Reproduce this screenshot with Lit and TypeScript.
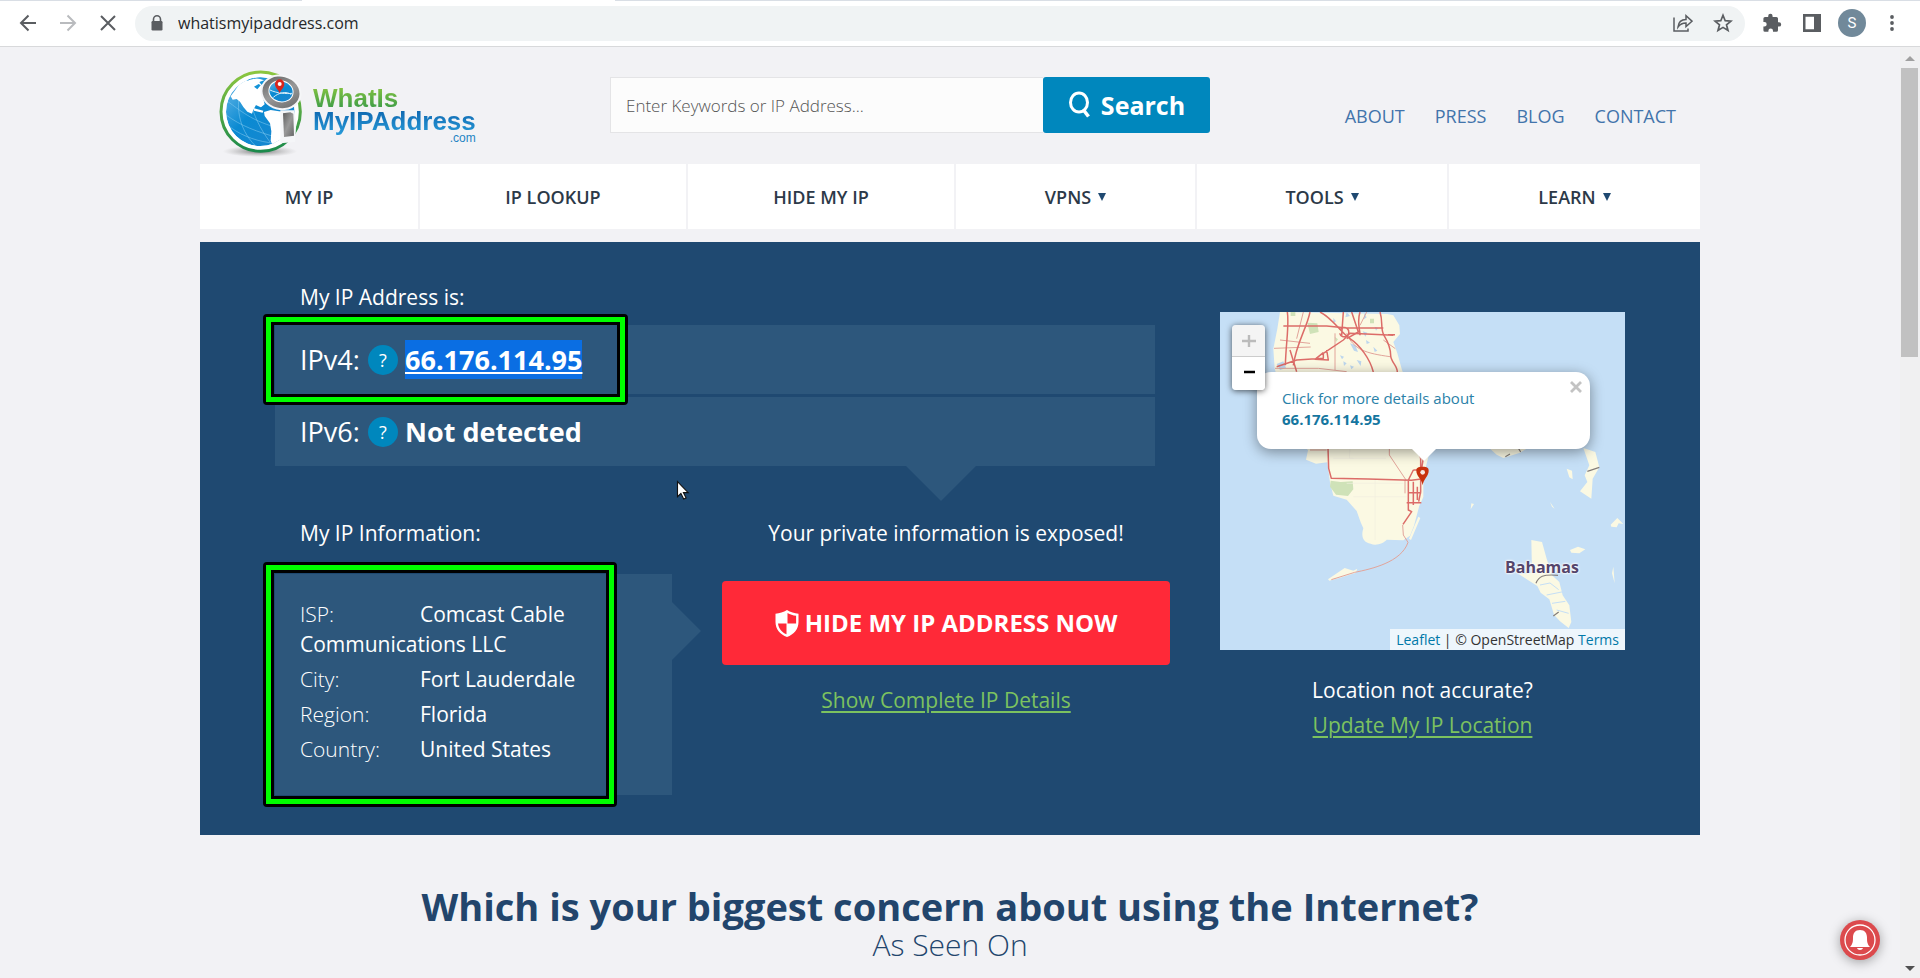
import { LitElement, html, css, svg } from "lit";
import { customElement } from "lit/decorators.js";

/* ---------- Browser toolbar ---------- */
@customElement("browser-bar")
class BrowserBar extends LitElement {
  static styles = css`
    :host {
      display: flex;
      align-items: center;
      gap: 7px;
      height: 47px;
      padding: 0 8px;
      box-sizing: border-box;
      border-bottom: 1px solid #d8d9db;
      background: linear-gradient(90deg, #d9dee5 302px, #fff 302px 615px, #d9dee5 615px) top / 100% 1px no-repeat #fff;
      font-family: "Open Sans", "Noto Sans", sans-serif;
    }
    .group { display: flex; }
    button {
      display: flex;
      align-items: center;
      justify-content: center;
      width: 40px;
      height: 34px;
      padding: 0;
      border: 0;
      background: none;
      color: #5a5d61;
    }
    .dim { color: #b9bbbe; }
    .omnibox {
      display: flex;
      align-items: center;
      flex: 1;
      height: 35px;
      padding: 0 2px 0 14px;
      border-radius: 18px;
      background: #f0f3f4;
    }
    .omnibox input {
      flex: 1;
      min-width: 0;
      height: 30px;
      margin: 0;
      padding: 0 0 0 13px;
      border: 0;
      outline: 0;
      background: none;
      color: #26282b;
      font: 400 16px/30px "Open Sans", "Noto Sans", sans-serif;
    }
    .avatar {
      display: flex;
      align-items: center;
      justify-content: center;
      width: 28px;
      height: 28px;
      border-radius: 50%;
      background: #71899a;
      color: #fff;
      font: 400 15px/28px Roboto, sans-serif;
    }
  `;
  render() {
    return html`
      <div class="group">
        <button aria-label="Back">
          <svg width="20" height="20" viewBox="0 0 20 20" fill="none" stroke="currentColor" stroke-width="2"><path d="M18 10H3M10.500 2.500 3 10l7.500 7.500" /></svg>
        </button>
        <button class="dim" aria-label="Forward">
          <svg width="20" height="20" viewBox="0 0 20 20" fill="none" stroke="currentColor" stroke-width="2"><path d="M2 10h15M9.500 2.500 17 10l-7.500 7.500" /></svg>
        </button>
        <button aria-label="Stop loading">
          <svg width="20" height="20" viewBox="0 0 20 20" fill="none" stroke="currentColor" stroke-width="2"><path d="m3 3 14 14M17 3 3 17" /></svg>
        </button>
      </div>
      <div class="omnibox">
        <svg width="16" height="18" viewBox="0 0 16 18"><path d="M4.500 8V5.200a3.500 3.500 0 0 1 7 0V8" fill="none" stroke="#5a5d61" stroke-width="1.600" /><rect x="2.500" y="7" width="11" height="9.500" rx="1.200" fill="#5a5d61" /></svg>
        <input aria-label="Address" value="whatismyipaddress.com" />
        <button aria-label="Share">
          <svg width="20" height="20" viewBox="0 0 20 20" fill="none" stroke="currentColor" stroke-width="1.500"><path d="M1 4.500V18h14v-2.500M5 14c.5-5 3.500-7.500 8-7.500V2.800l6 5.400-6 5.300V10c-3.500 0-6 1.200-8 4z" /></svg>
        </button>
        <button aria-label="Bookmark">
          <svg width="20" height="20" viewBox="0 0 20 20" fill="none" stroke="currentColor" stroke-width="1.700"><path d="m10 2.300 2.200 5.400 5.800.4-4.500 3.700 1.500 5.700-5-3.100-5 3.100 1.500-5.700L2 8.100l5.800-.4z" /></svg>
        </button>
      </div>
      <div class="group">
        <button aria-label="Extensions">
          <svg width="20" height="20" viewBox="0 0 20 20" fill="currentColor"><path d="M17 9.200h-1V5.500a1.600 1.600 0 0 0-1.600-1.600h-3.800V3a2.200 2.200 0 0 0-4.400 0v.9H3A1.700 1.700 0 0 0 1.400 5.500v3.400h1a2.300 2.300 0 0 1 0 4.600h-1v3.700A1.600 1.600 0 0 0 3 18.800h3.400v-1a2.300 2.300 0 0 1 4.600 0v1h3.400a1.600 1.600 0 0 0 1.600-1.600v-3.600h1a2.200 2.200 0 0 0 0-4.400z" /></svg>
        </button>
        <button aria-label="Side panel">
          <svg width="18" height="18" viewBox="0 0 18 18"><path fill="currentColor" fill-rule="evenodd" d="M0 0h18v18H0zM2.500 2.800v12.400H11V2.800z" /></svg>
        </button>
        <button aria-label="Profile"><span class="avatar">S</span></button>
        <button aria-label="Menu">
          <svg width="4" height="18" viewBox="0 0 4 18" fill="currentColor"><circle cx="2" cy="3" r="1.900" /><circle cx="2" cy="9" r="1.900" /><circle cx="2" cy="15" r="1.900" /></svg>
        </button>
      </div>
    `;
  }
}

/* ---------- Site logo ---------- */
@customElement("site-logo")
class SiteLogo extends LitElement {
  static styles = css`
    :host { display: block; }
    .logo { display: flex; align-items: flex-start; gap: 3px; text-decoration: none; }
    .words {
      display: flex;
      flex-direction: column;
      padding-top: 25px;
      font: 700 26px/23px "Liberation Sans", Arial, sans-serif;
    }
    .green { background: linear-gradient(#84c341, #258f4b); }
    .blue { background: linear-gradient(#0f67b0, #2ba3df); }
    .green, .blue {
      padding-bottom: 6px;
      margin-bottom: -6px;
      -webkit-background-clip: text;
      background-clip: text;
      color: transparent;
    }
    .com { align-self: flex-end; color: #2484c4; font-size: 12px; font-weight: 400; line-height: 10px; }
  `;
  render() {
    return html`
      <a class="logo" href="#" aria-label="WhatIsMyIPAddress.com home">
        <svg width="100" height="100" viewBox="0 0 300 300">
          <defs>
            <linearGradient id="ring" x1="0" y1="0" x2="0" y2="1"><stop offset="0" stop-color="#8cc63f" /><stop offset="1" stop-color="#1b8a4c" /></linearGradient>
            <linearGradient id="sea" x1="0" y1="0" x2="1" y2="1"><stop offset="0" stop-color="#6fbbe9" /><stop offset=".45" stop-color="#0a8ad2" /><stop offset="1" stop-color="#1d86cf" /></linearGradient>
            <linearGradient id="metal" x1="0" y1="0" x2="1" y2="1"><stop offset="0" stop-color="#5e5e5e" /><stop offset=".5" stop-color="#999" /><stop offset="1" stop-color="#666" /></linearGradient>
            <radialGradient id="shade"><stop offset="0" stop-color="#555" stop-opacity=".8" /><stop offset="1" stop-color="#999" stop-opacity="0" /></radialGradient>
            <clipPath id="globe"><circle cx="151" cy="149" r="103" /></clipPath>
          </defs>
          <ellipse cx="150" cy="268" rx="112" ry="17" fill="url(#shade)" />
          <circle cx="152" cy="149" r="119" fill="#fff" stroke="url(#ring)" stroke-width="9" />
          <g clip-path="url(#globe)">
            <circle cx="151" cy="149" r="103" fill="url(#sea)" />
            <g fill="none" stroke="#8fd0f2" stroke-width="1.500">
              <path d="M50 160c40 30 90 50 165 70M55 120c30 20 70 60 160 80M95 70c-20 60-10 130 40 180M120 110c10 50 30 90 60 130M60 195c40 30 90 45 130 48" />
            </g>
            <path fill="#fff" d="M76 84c12-22 38-36 62-37l24 8 6 44-8 12 4 16-10 8-6-8-10 2-8 14-4 12-14-6-12-14-10-16-10-8-12 2-6-10z" />
            <path fill="#fff" d="m162 150 20-6 40 6 20 20-2 60-14 16-34 14-10-24 2-28-4-24-16-22z" />
            <path fill="#1494d8" d="M132 74l14-8 6 4-10 12zM148 60l16-6 4 8-14 6z" />
            <path fill="#fff" d="m140 122 18 8-6 6-16-8zM130 138l30 8-2 6-26-6z" />
            <path fill="none" stroke="#1494d8" stroke-width="3" d="M112 55c20-10 60-10 80 0" />
          </g>
          <ellipse cx="213" cy="91" rx="62" ry="53" transform="rotate(14 213 91)" fill="#f5f6f8" />
          <path fill="#f5f6f8" d="M211 145h42l6 40-4 55-44 4z" />
          <ellipse cx="213" cy="91" rx="56" ry="47" transform="rotate(14 213 91)" fill="url(#metal)" />
          <ellipse cx="213" cy="88" rx="38" ry="33" transform="rotate(14 213 88)" fill="#fff" />
          <ellipse cx="213" cy="88" rx="35" ry="30" transform="rotate(14 213 88)" fill="url(#sea)" />
          <path d="M180 84c20 10 50 12 66 10M190 106c15-14 40-20 54-8" fill="none" stroke="#d7eefa" stroke-width="3" />
          <path fill="#d8251c" d="M209 94c-3-12-14-16-14-28a14 14 0 0 1 28 0c0 12-11 16-14 28z" />
          <circle cx="209" cy="66" r="6" fill="#fff" />
          <path fill="url(#metal)" d="m219 154 22-3 9 4 2 66-30 4z" />
        </svg>
        <span class="words"><span class="green">WhatIs</span><span class="blue">MyIPAddress</span><span class="com">.com</span></span>
      </a>
    `;
  }
}

/* ---------- Location map ---------- */
const roads = [
  "M262 66c6 40-4 90-6 160M330 66c-10 50-40 90-50 160M360 66c40 20 60 60 90 80s60 60 70 100M430 66l-5 70M455 66l20 60-35 20M480 66c-10 30 0 50 0 70M540 66c10 30 0 50 12 70s20 40 20 60 20 30 20 50",
  "M230 230l60-20 80-5 0-15 60-40 20-20 130 6M250 108h130l60 6h110M585 134h-20M420 120a14 14 0 1 1-1 10M270 180l20 65M380 180l5 30-40-2 25-20",
  "M384 475l2 60 8 30 110 2 130 4 30-4M640 540l-15 30v90l10 5-26 38M640 540h24l6-35M662 505v100l-6 30M626 608h38M620 638h44M640 575v70M652 590v40"
];
const lanes = "M222 175l110-4M310 66l-20 80M225 235h130l85 10M440 130c20 50 60 60 130 70M405 130v110M568 475v20l30 45 20 30M608 705l2 30 14 22c-20 60-110 80-160 90l-70 22M660 475v30M500 66l-20 40M550 150l36 26M240 150l90 10M330 480h50M615 570v40";

@customElement("location-map")
class LocationMap extends LitElement {
  static styles = css`
    :host {
      display: block;
      position: relative;
      overflow: hidden;
      background: #c5dff6;
      font-family: "Open Sans", "Noto Sans", sans-serif;
    }
    .canvas { display: block; width: 100%; }
    .zoom {
      position: absolute;
      top: 13px;
      left: 12px;
      z-index: 2;
      display: flex;
      flex-direction: column;
      width: 33px;
      border-radius: 4px;
      overflow: hidden;
      box-shadow: 0 1px 6px rgba(0, 0, 0, 0.65);
    }
    .zoom button {
      height: 33px;
      padding: 0;
      border: 0;
      background: #fff;
      color: #000;
      display: flex;
      align-items: center;
      justify-content: center;
    }
    .zoom .off { height: 32px; border-bottom: 1px solid #ccc; background: #f4f4f4; color: #bbb; }
    .place {
      position: absolute;
      left: 285px;
      top: 244px;
      color: #54456b;
      font-size: 16px;
      font-weight: 700;
      line-height: 22px;
      text-shadow: 0 0 2px #fff, 0 0 2px #fff, 0 0 3px #fff;
    }
    .popup {
      position: absolute;
      top: 60px;
      left: 37px;
      width: 333px;
      height: 77px;
      box-sizing: border-box;
      padding: 16px 25px;
      border-radius: 14px;
      background: #fff;
      box-shadow: 0 3px 14px rgba(0, 0, 0, 0.4);
    }
    .popup::after {
      content: "";
      position: absolute;
      top: 100%;
      left: 50%;
      margin-left: -12px;
      border: 12px solid transparent;
      border-top-color: #fff;
      border-bottom: 0;
    }
    .popup a { display: block; color: #2a81a8; font-size: 15px; line-height: 21px; text-decoration: none; }
    .popup b { display: block; color: #15769f; font-weight: 700; }
    .close {
      position: absolute;
      top: 7px;
      right: 6px;
      width: 16px;
      height: 16px;
      padding: 0;
      border: 0;
      background: none;
      color: #c3c3c3;
      display: flex;
    }
    .credit {
      position: absolute;
      right: 0;
      bottom: 0;
      padding: 0 6px;
      background: rgba(255, 255, 255, 0.7);
      color: #333;
      font-size: 14px;
      line-height: 21px;
      white-space: nowrap;
    }
    .credit a { color: #0078a8; text-decoration: none; }
  `;
  render() {
    return html`
      <svg class="canvas" viewBox="60 66 1215 1014" aria-hidden="true">
        <path fill="#fbf9e3" d="M240 66l-8 50-12 60 4 60 60 200 40 45-6 28 30 12 34-4 8 60 10 40 40 12 30 34 12 34 8 18c-8 24 0 44 22 46 16 8 40-2 48-12l50 2 20-14 12-30 16-60 12-26v-60l20-80V470l-84-230-14-50-12-34 20-24-2-26-18-30-18-4z" />
        <g fill="#fbf9e3">
          <path d="M870 476h110l-20 12-50 16-20-10zM1150 474l36 12 12 46-20 34-4 60-34-22 22-28-8-20 14-30zM1100 536l16 6 2 26-10-6zM814 640l8 2-10 16zM1050 636l14 20-8-6zM1232 704l20-20 18 18-14-2-6 12-16-2zM1110 780l24-10 22 8-18 12-24-2z" />
          <path d="M994 750l32 6 14 50 16 50 22 20 10 40 20 30 6 50-8 18-26-20-18-20-14-46-26-20-10-20-56-36 40-4z" />
          <path d="M655 680l6 4-28 66-6-4zM384 868l50-34 26 8 12-6-4 12-50 16-30 8zM1240 830l4 50-8-30z" />
        </g>
        <path d="M1020 885l30-6 26 20M1040 915l50-10M1056 940l40-6M1070 960l36 10" fill="none" stroke="#c5dff6" stroke-width="3" />
        <g fill="#cfe2b8">
          <path d="M392 572l30 4 36-2 2 24-16 20-36-4-18-24z" /><path d="M322 98l30 2 4 26-26 6zM272 66h14v12h-14zM510 86h12v14h-12zM404 140l10 8-6 8z" />
        </g>
        <g fill="#bcd6ee">
          <path d="M440 66l10 12-14 4zM492 70l8 12-8 6zM450 160l16 6 8 20-12-4zM230 222l20-8 8 20-18 6zM470 210l14 4-2 14zM488 124l14 4-6 12zM420 196l12 4-6 8zM430 214l10 6-8 8zM450 226l12 4-8 8zM498 150l12 8-10 4zM520 170l12 12-8 4zM400 84l8 10-8 4zM524 110l10 4-6 8z" />
        </g>
        <path d="M450 475l-2 30h110M440 580h170M460 620h160M525 570v180M400 505h60" fill="none" stroke="#f1eedf" stroke-width="2" />
        <path d=${lanes} fill="none" stroke="#e2a49a" stroke-width="3" />
        ${roads.map((d) => svg`<path d=${d} fill="none" stroke="#dc6c68" stroke-width="4.500" stroke-linejoin="round" />`)}
        <path d="M1162 544l36-12M1008 880c8-20 20-28 66-24M1060 978l16-12M916 500l14-8M956 476l6 10" fill="none" stroke="#847d7a" stroke-width="3.500" />
        <path d="M668 586c-2-18-19-28-19-44 0-9 5-12 19-12s18 3 18 12c0 16-16 26-18 44z" fill="#c8310d" />
        <circle cx="668" cy="547" r="7" fill="#f6e6e0" />
      </svg>
      <span class="place">Bahamas</span>
      <div class="popup">
        <a href="#">Click for more details about <b>66.176.114.95</b></a>
        <button class="close" aria-label="Close popup">
          <svg width="16" height="16" viewBox="0 0 16 16" fill="none" stroke="currentColor" stroke-width="2.800"><path d="m3 3 10 10M13 3 3 13" /></svg>
        </button>
      </div>
      <div class="zoom">
        <button class="off" aria-label="Zoom in" disabled><svg width="14" height="14" viewBox="0 0 14 14" stroke="currentColor" stroke-width="2.400"><path d="M0 7h14M7 1v12" /></svg></button>
        <button aria-label="Zoom out"><svg width="12" height="14" viewBox="0 0 12 14" stroke="currentColor" stroke-width="2.400"><path d="M1 5h11" /></svg></button>
      </div>
      <div class="credit"><a href="#">Leaflet</a> | © OpenStreetMap <a href="#">Terms</a></div>
    `;
  }
}

/* ---------- Page ---------- */
const menu = [
  { label: "MY IP", more: false },
  { label: "IP LOOKUP", more: false },
  { label: "HIDE MY IP", more: false },
  { label: "VPNS", more: true },
  { label: "TOOLS", more: true },
  { label: "LEARN", more: true },
];

const details = [
  ["ISP:", "Comcast Cable Communications LLC"],
  ["City:", "Fort Lauderdale"],
  ["Region:", "Florida"],
  ["Country:", "United States"],
];

@customElement("app-root")
class AppRoot extends LitElement {
  static styles = css`
    :host {
      display: flex;
      flex-direction: column;
      height: 100vh;
      overflow: hidden;
      background: #f2f2f5;
      font-family: "Open Sans", "Noto Sans", sans-serif;
    }
    browser-bar { flex: none; }
    .view { display: flex; flex: 1; min-height: 0; }
    .page { flex: 1; min-width: 0; overflow: hidden; }
    .wrap { max-width: 1500px; margin: 0 auto; }

    .scroll {
      display: flex;
      flex-direction: column;
      align-items: center;
      width: 20px;
      box-sizing: border-box;
      padding: 9px 1px 7px 0;
      background: #f0f0f1;
    }
    .thumb { width: 17px; height: 289px; margin: 7px 0 auto; background: #c1c1c1; }

    header {
      display: flex;
      align-items: flex-start;
      height: 117px;
      box-sizing: border-box;
      padding: 15px 24px 0 10px;
    }
    site-logo { flex: 0 0 400px; }
    .search { display: flex; flex: 0 0 600px; padding-top: 15px; }
    .search input {
      flex: 1;
      min-width: 0;
      height: 56px;
      box-sizing: border-box;
      padding: 0 15px;
      border: 1px solid #e4e4e6;
      border-right: 0;
      border-radius: 0;
      outline: 0;
      background: #fcfcfc;
      font: 300 17px/24px "Open Sans", "Noto Sans", sans-serif;
    }
    .search input::placeholder { color: #555; opacity: 1; }
    .search button {
      display: flex;
      align-items: center;
      justify-content: center;
      gap: 9px;
      width: 167px;
      padding: 0;
      border: 0;
      border-radius: 3px;
      background: #0087bd;
      color: #fff;
      font: 700 25px/32px "Open Sans", "Noto Sans", sans-serif;
    }
    .links { display: flex; gap: 30px; margin-left: auto; padding-top: 42px; }
    .links a { color: #4274ab; font-size: 18px; font-weight: 500; line-height: 24px; text-decoration: none; }

    .menu {
      display: grid;
      grid-template-columns: 218fr 266fr 266fr 239fr 250fr 251fr;
      gap: 2px;
      margin-bottom: 13px;
    }
    .menu a {
      display: flex;
      align-items: center;
      justify-content: center;
      gap: 7px;
      height: 65px;
      background: #fff;
      color: #2c3948;
      font-size: 18px;
      font-weight: 600;
      line-height: 24px;
      text-decoration: none;
    }

    .panel {
      display: grid;
      grid-template-columns: 895fr 405fr;
      column-gap: 50px;
      padding: 40px 75px;
      background: #1f4971;
      color: #fff;
    }
    h2 { margin: 0; font-size: 21px; font-weight: 400; line-height: 30px; }
    .indent { padding-left: 25px; }
    .rows { position: relative; display: grid; gap: 3px; margin: 13px 15px 52px 0; }
    .row {
      display: flex;
      align-items: center;
      gap: 7px;
      height: 69px;
      padding-left: 25px;
      background: #2d577c;
      font-size: 27px;
      line-height: 39px;
    }
    .row .kind { width: 61px; font-weight: 400; }
    .row b { font-weight: 700; }
    .row a { color: #fff; font-weight: 700; background: #0a6ee3; }
    .help {
      width: 30px;
      height: 30px;
      padding: 0;
      border: 0;
      border-radius: 50%;
      background: #0087bd;
      color: #fff;
      font: 400 18px/30px "Open Sans", "Noto Sans", sans-serif;
    }
    .down {
      position: absolute;
      top: 100%;
      left: 631px;
      border: 35px solid transparent;
      border-top-color: #2d577c;
      border-bottom: 0;
    }
    .frame {
      position: absolute;
      top: -11px;
      left: -12px;
      height: 91px;
      width: 365px;
      box-sizing: border-box;
      border: 3px solid #000;
      border-radius: 4px;
      pointer-events: none;
    }
    .frame::before {
      content: "";
      position: absolute;
      inset: 0;
      border: 5px solid #00ff00;
    }
    .frame::after {
      content: "";
      position: absolute;
      inset: 5px;
      border: 3px solid #000;
    }
    .frame.tall { top: -12px; width: 354px; height: 245px; }

    .lower { display: grid; grid-template-columns: 397fr 448fr; column-gap: 50px; }
    .info {
      position: relative;
      height: 221px;
      box-sizing: border-box;
      margin-top: 26px;
      padding: 25px 25px;
      background: #2d577c;
    }
    .info::after {
      content: "";
      position: absolute;
      left: 100%;
      top: 28px;
      border: 29px solid transparent;
      border-left-color: #2d577c;
      border-right: 0;
    }
    .info ul { display: grid; gap: 5px; margin: 0; padding: 0; list-style: none; }
    .info li { font-size: 21px; line-height: 30px; }
    .info .key { display: inline-block; width: 120px; font-weight: 300; }

    .exposed { display: flex; flex-direction: column; align-items: center; }
    .hide {
      display: flex;
      align-items: center;
      justify-content: center;
      gap: 6px;
      width: 100%;
      height: 84px;
      margin: 33px 0 20px;
      padding: 0;
      border: 0;
      border-radius: 4px;
      background: #ff2938;
      color: #fff;
      font: 700 24px/32px "Open Sans", "Noto Sans", sans-serif;
    }
    .more { color: #7cc25f; font-size: 21px; line-height: 30px; text-underline-offset: 3px; }

    .where { display: flex; flex-direction: column; align-items: center; padding-top: 30px; }
    .where location-map { width: 100%; margin-bottom: 25px; }
    .where p { margin: 0 0 5px; font-size: 21px; line-height: 30px; }

    .concern { margin: 45px 0 0; color: #22456c; font-size: 38px; font-weight: 700; line-height: 52px; text-align: center; }
    .seen { margin: 0; color: #22456c; font-size: 30px; font-weight: 300; line-height: 26px; text-align: center; }

    .bell {
      position: absolute;
      right: 40px;
      bottom: 18px;
      width: 40px;
      height: 40px;
      padding: 0;
      border: 0;
      border-radius: 50%;
      background: #dc4a4d;
      box-shadow: 0 2px 12px rgba(0, 0, 0, 0.35);
    }
    .pointer { position: absolute; left: 676px; top: 480px; }
  `;

  private caret() {
    return html`<svg width="8" height="8" viewBox="0 0 8 8"><path d="M0 0h8L4 8z" fill="#1f4971" /></svg>`;
  }

  render() {
    return html`
      <browser-bar></browser-bar>
      <div class="view">
        <main class="page">
          <div class="wrap">
            <header>
              <site-logo></site-logo>
              <form class="search" role="search">
                <input type="text" aria-label="Search" placeholder="Enter Keywords or IP Address..." />
                <button type="button">
                  <svg width="24" height="28" viewBox="0 0 24 28" fill="none" stroke="#fff" stroke-width="3"><ellipse cx="11" cy="11.500" rx="8.500" ry="9.500" /><path d="m15.500 19 5 6.500" stroke-width="3.600" /></svg>
                  Search
                </button>
              </form>
              <nav class="links" aria-label="Site">
                <a href="#">ABOUT</a><a href="#">PRESS</a><a href="#">BLOG</a><a href="#">CONTACT</a>
              </nav>
            </header>
            <nav class="menu" aria-label="Main">
              ${menu.map((m) => html`<a href="#">${m.label}${m.more ? this.caret() : ""}</a>`)}
            </nav>
            <section class="panel">
              <div>
                <h2 class="indent">My IP Address is:</h2>
                <div class="rows">
                  <div class="row"><span class="kind">IPv4:</span><button class="help" aria-label="About IPv4">?</button><a href="#">66.176.114.95</a></div>
                  <div class="row"><span class="kind">IPv6:</span><button class="help" aria-label="About IPv6">?</button><b>Not detected</b></div>
                  <span class="down"></span>
                  <span class="frame"></span>
                </div>
                <div class="lower">
                  <div>
                    <h2 class="indent">My IP Information:</h2>
                    <div class="info">
                      <ul>
                        ${details.map(([key, value]) => html`<li><span class="key">${key}</span>${value}</li>`)}
                      </ul>
                      <span class="frame tall"></span>
                    </div>
                  </div>
                  <div class="exposed">
                    <h2>Your private information is exposed!</h2>
                    <button class="hide">
                      <svg width="24" height="27" viewBox="0 0 24 27"><path fill="#fff" fill-rule="evenodd" d="M12 0c3.500 2 7.500 3.400 11.500 3.800V12c0 7-4.500 12.500-11.500 15C5 24.500.5 19 .5 12V3.800C4.500 3.400 8.500 2 12 0zM12.500 3v10.500h8.600V5.800C18 5.400 15 4.400 12.500 3zM11.500 13.500H3c.6 5 3.700 8.700 8.500 10.800z" /></svg>
                      HIDE MY IP ADDRESS NOW
                    </button>
                    <a class="more" href="#">Show Complete IP Details</a>
                  </div>
                </div>
              </div>
              <div class="where">
                <location-map></location-map>
                <p>Location not accurate?</p>
                <a class="more" href="#">Update My IP Location</a>
              </div>
            </section>
            <h1 class="concern">Which is your biggest concern about using the Internet?</h1>
            <p class="seen">As Seen On</p>
          </div>
        </main>
        <div class="scroll" aria-hidden="true">
          <svg width="10" height="5" viewBox="0 0 10 5"><path d="M5 0l5 5H0z" fill="#a0a0a0" /></svg>
          <div class="thumb"></div>
          <svg width="10" height="5" viewBox="0 0 10 5"><path d="M0 0h10L5 5z" fill="#505050" /></svg>
        </div>
      </div>
      <button class="bell" aria-label="Notifications">
        <svg width="40" height="40" viewBox="0 0 40 40"><circle cx="20" cy="20" r="15" fill="none" stroke="#fff" stroke-width="1.300" /><path fill="#fff" d="M20 10c5 0 7 3.500 7 7.500 0 4.500.3 6.500 3 9.500H10c2.700-3 3-5 3-9.500C13 13.500 15 10 20 10zM17 28h6c-.5 2.500-5.500 2.500-6 0z" /></svg>
      </button>
      <svg class="pointer" width="14" height="21" viewBox="0 0 14 21"><path d="M1.500 1.500v15.200l3.400-3.200 2.800 5.600 2.400-1.200-2.700-5.300h4.800z" fill="#fff" stroke="#111" stroke-width="1.100" /></svg>
    `;
  }
}
